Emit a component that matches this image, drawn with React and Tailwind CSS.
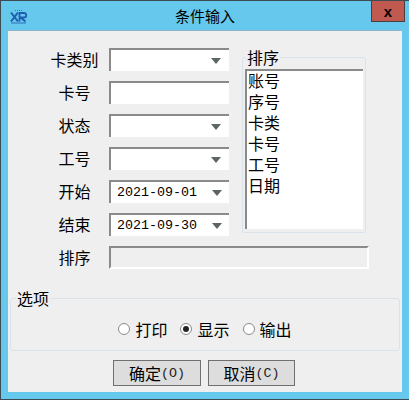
import React from "react";

const cjk = { fontFamily: '"Noto Sans CJK SC", sans-serif' };
const mono = { fontFamily: '"Liberation Mono", "Noto Sans CJK SC", monospace' };

function Arrow({ shift }) {
  return (
    <svg width="10" height="6" viewBox="0 0 10 6" className={shift ? "mr-[7px]" : "mr-[8px]"}>
      <path d="M0 0H10L5 6Z" fill="#5c665f" />
    </svg>
  );
}

function Field({ select, value, wide, disabled }) {
  return (
    <div
      className={`flex h-[23px] items-center justify-between border-t-2 border-l-2 border-t-[#8a8a8a] border-l-[#8a8a8a] ${
        wide ? "w-[260px]" : "w-[120px]"
      } ${disabled ? "border-r-2 border-b-2 border-r-white border-b-white bg-[#efefef]" : "bg-white"}`}
    >
      <span className="pl-[6px] text-[13.33px] leading-none text-black" style={mono}>{value}</span>
      {select && <Arrow shift={!!value} />}
    </div>
  );
}

function Row({ label, children }) {
  return (
    <div className="flex h-[23px] items-center">
      <div className="w-[101px] pl-[42px]">
        <div className="w-[49px] text-center text-[16px] leading-[23px] whitespace-nowrap">{label}</div>
      </div>
      {children}
    </div>
  );
}

function Radio({ label, checked }) {
  return (
    <div className="flex items-center gap-[5px]">
      <div className="flex size-[12px] items-center justify-center rounded-full border border-[#8a8a8a] bg-white">
        {checked && <div className="size-[6px] rounded-full bg-[#222]" />}
      </div>
      <span className="text-[16px] leading-[20px]">{label}</span>
    </div>
  );
}

function Btn({ text, mnemonic, w }) {
  return (
    <div className={`flex h-[26px] items-center justify-center border border-[#707070] bg-[#dddddd] text-[16px] ${w}`}>
      <span className="leading-[20px]">{text}</span>
      <span className="pt-px text-[13.33px] leading-[20px] text-[#222]" style={mono}>{mnemonic}</span>
    </div>
  );
}

export default function App() {
  const items = ["账号", "序号", "卡类", "卡号", "工号", "日期"];
  return (
    <div
      className="flex h-[400px] w-[409px] flex-col overflow-hidden border-t border-b border-l border-[#3c4a52] bg-[#65c8ec] text-black"
      style={cjk}
    >
      <div className="relative flex h-[29px] shrink-0 items-center justify-center">
        <svg width="17" height="15" viewBox="0 0 17 15" className="absolute top-[8px] left-[9px]">
          <path d="M5 1.5h7" stroke="#3a78b8" strokeWidth="1" strokeDasharray="1 1" fill="none" />
          <path d="M1 3.5L8 12.5M8 3.5L1 12.5" stroke="#1f5dae" strokeWidth="2" fill="none" />
          <path d="M9.5 12.5V4H14a2.2 2.2 0 0 1 0 4.5H10.5L15.5 12.5" stroke="#1f5dae" strokeWidth="1.8" fill="none" />
          <path d="M1 14h15" stroke="#2f6fb8" strokeWidth="1" fill="none" />
        </svg>
        <span className="pb-[1px] text-[15px] leading-none">条件输入</span>
        <div className="absolute top-0 right-[4px] flex h-[21px] w-[34px] items-center justify-center border border-t-0 border-[#4a3f3f] bg-[#c0594f]">
          <span className="text-[15px] leading-none font-black" style={{ fontFamily: '"Liberation Sans", sans-serif' }}>x</span>
        </div>
      </div>

      <div className="ml-[7px] h-[362px] w-[394px] border-t border-[#8fb4cc] bg-[#efefef] pt-[17px]">
        <div className="flex items-start">
          <div className="flex w-[233px] flex-col gap-[10px]">
            <Row label="卡类别"><Field select /></Row>
            <Row label="卡号"><Field /></Row>
            <Row label="状态"><Field select /></Row>
            <Row label="工号"><Field select /></Row>
            <Row label="开始"><Field select value="2021-09-01" /></Row>
            <Row label="结束"><Field select value="2021-09-30" /></Row>
          </div>
          <fieldset className="ml-px h-[185px] w-[124px] rounded-[2px] border border-[#dbe3ea] px-[2px] pt-[3px] pb-[3px]">
            <legend className="ml-px px-px text-[16px] leading-[18px]">排序</legend>
            <div className="h-[160px] border-t-2 border-l-2 border-t-[#8a8a8a] border-l-[#8a8a8a] bg-white">
              <div className="-mt-px">
                {items.map((t) => (
                  <div key={t} className="pl-[1px] text-[16px] leading-[21px]">{t}</div>
                ))}
              </div>
            </div>
          </fieldset>
        </div>

        <div className="mt-[10px]">
          <Row label="排序"><Field wide disabled /></Row>
        </div>

        <fieldset className="mt-[20px] ml-[2px] h-[62px] w-[390px] rounded-[3px] border border-[#dbe3ea]">
          <legend className="ml-[5px] px-px text-[16px] leading-[18px]">选项</legend>
          <div className="flex justify-center gap-[13px] pt-[12px]">
            <Radio label="打印" />
            <Radio label="显示" checked />
            <Radio label="输出" />
          </div>
        </fieldset>

        <div className="mt-[9px] flex gap-[7px] pl-[105px]">
          <Btn text="确定" mnemonic="(O)" w="w-[88px]" />
          <Btn text="取消" mnemonic="(C)" w="w-[87px]" />
        </div>
      </div>
    </div>
  );
}
